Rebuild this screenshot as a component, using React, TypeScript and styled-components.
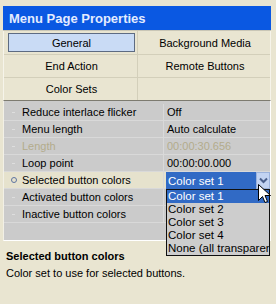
import React from "react";
import styled, { createGlobalStyle } from "styled-components";

const GlobalStyle = createGlobalStyle`
  html, body {
    margin: 0;
    padding: 0;
    background: #e9e5d1;
  }
  body {
    font-family: "Liberation Sans", Arial, sans-serif;
    font-size: 11px;
    color: #000;
  }
`;

const Window = styled.div`
  position: relative;
  width: 276px;
  height: 304px;
  box-sizing: border-box;
  padding: 6px 5px 0 3px;
  background: #e9e5d1;
  overflow: hidden;
`;

const TitleBar = styled.div`
  height: 24px;
  display: flex;
  align-items: center;
  padding-left: 6px;
  background: #0a58e2;
  color: #e4ecff;
  font-size: 13px;
  font-weight: bold;
  border-bottom: 1px solid #c9c6b6;
`;

const Tabs = styled.div`
  display: grid;
  grid-template-columns: 134px 1fr;
  grid-template-rows: 24px 23px 22px;
  border-left: 1px solid #f6f4ea;
  border-right: 1px solid #f6f4ea;
`;

const TabCell = styled.div<{ $left?: boolean; $last?: boolean }>`
  display: flex;
  align-items: center;
  justify-content: center;
  border-right: ${(p) => (p.$left ? "1px solid #d3cfba" : "none")};
  border-bottom: ${(p) => (p.$last ? "none" : "1px solid #d3cfba")};
  padding: 2px 2px 2px 4px;
`;

const TabButton = styled.div<{ $active?: boolean }>`
  flex: 1;
  align-self: stretch;
  display: flex;
  align-items: center;
  justify-content: center;
  background: ${(p) => (p.$active ? "#c9dbf5" : "transparent")};
  border: 1px solid ${(p) => (p.$active ? "#5d6b82" : "transparent")};
`;

const Grid = styled.div`
  position: relative;
  height: 141px;
  box-sizing: border-box;
  padding-top: 3px;
  background: #cbcbcb;
  border-top: 1px solid #7d7b70;
  border-left: 1px solid #f2f0e6;
  border-right: 1px solid #ffffff;
  border-bottom: 1px solid #ffffff;
`;

const Row = styled.div<{ $selected?: boolean }>`
  display: grid;
  grid-template-columns: 16px 144px 1fr;
  height: 17px;
  box-sizing: border-box;
  border-bottom: 1px solid #d9d9d9;
  background: ${(p) => (p.$selected ? "#e6e2cd" : "transparent")};
`;

const Gutter = styled.div`
  display: flex;
  align-items: center;
  justify-content: center;
  padding-left: 3px;
`;

const Dash = styled.span`
  width: 3px;
  height: 1px;
  background: #dedede;
`;

const Dot = styled.span`
  width: 4px;
  height: 4px;
  border-radius: 50%;
  border: 1px solid #5d74a0;
`;

const Label = styled.div<{ $disabled?: boolean }>`
  display: flex;
  align-items: center;
  padding-left: 2px;
  color: ${(p) => (p.$disabled ? "#b3ab8c" : "#000")};
  white-space: nowrap;
  border-right: 1px solid #d9d9d9;
`;

const Value = styled.div<{ $disabled?: boolean }>`
  position: relative;
  display: flex;
  align-items: center;
  padding-left: 3px;
  color: ${(p) => (p.$disabled ? "#b3ab8c" : "#000")};
  white-space: nowrap;
`;

const Combo = styled.div`
  position: absolute;
  inset: 0 0 -1px 2px;
  display: flex;
  align-items: center;
  background: #316ac5;
  color: #fff;
  font-size: 11.5px;
`;

const ComboText = styled.span`
  flex: 1;
  padding-left: 2px;
`;

const ComboButton = styled.div`
  width: 14px;
  align-self: stretch;
  display: flex;
  align-items: center;
  justify-content: center;
  background: #c2d3f2;
  border: 1px solid #9bb2dc;
  box-sizing: border-box;
`;

const ListBox = styled.div`
  position: absolute;
  top: calc(100% + 1px);
  left: 2px;
  right: 0;
  z-index: 2;
  background: #cdcdcd;
  border: 1px solid #101010;
  overflow: hidden;
  font-size: 11.5px;
`;

const ListItem = styled.div<{ $active?: boolean }>`
  height: 13px;
  line-height: 13px;
  padding-left: 1px;
  white-space: nowrap;
  background: ${(p) => (p.$active ? "#316ac5" : "transparent")};
  color: ${(p) => (p.$active ? "#fff" : "#000")};
`;

const Cursor = styled.svg`
  position: absolute;
  left: 258px;
  top: 184px;
  z-index: 5;
`;

const Description = styled.div`
  padding: 8px 0 0 3px;
`;

const DescTitle = styled.div`
  font-weight: bold;
  height: 14px;
  line-height: 14px;
  margin-bottom: 3px;
`;

const DescText = styled.div`
  height: 14px;
  line-height: 14px;
`;

type Prop = { label: string; value: string; disabled?: boolean; selected?: boolean };

const props: Prop[] = [
  { label: "Reduce interlace flicker", value: "Off" },
  { label: "Menu length", value: "Auto calculate" },
  { label: "Length", value: "00:00:30.656", disabled: true },
  { label: "Loop point", value: "00:00:00.000" },
  { label: "Selected button colors", value: "Color set 1", selected: true },
  { label: "Activated button colors", value: "" },
  { label: "Inactive button colors", value: "" },
];

const options = ["Color set 1", "Color set 2", "Color set 3", "Color set 4", "None (all transparent)"];

export default function App() {
  return (
    <Window>
      <GlobalStyle />
      <TitleBar>Menu Page Properties</TitleBar>
      <Tabs>
        <TabCell $left>
          <TabButton $active>General</TabButton>
        </TabCell>
        <TabCell>
          <TabButton>Background Media</TabButton>
        </TabCell>
        <TabCell $left>
          <TabButton>End Action</TabButton>
        </TabCell>
        <TabCell>
          <TabButton>Remote Buttons</TabButton>
        </TabCell>
        <TabCell $left $last>
          <TabButton>Color Sets</TabButton>
        </TabCell>
        <TabCell $last />
      </Tabs>
      <Grid>
        {props.map((p) => (
          <Row key={p.label} $selected={p.selected}>
            <Gutter>{p.selected ? <Dot /> : <Dash />}</Gutter>
            <Label $disabled={p.disabled}>{p.label}</Label>
            <Value $disabled={p.disabled}>
              {p.selected ? (
                <>
                  <Combo>
                    <ComboText>{p.value}</ComboText>
                    <ComboButton>
                      <svg width="9" height="7" viewBox="0 0 9 7">
                        <path d="M1 1.5 L4.5 5 L8 1.5" fill="none" stroke="#4a5f8c" strokeWidth="2" />
                      </svg>
                    </ComboButton>
                  </Combo>
                  <ListBox>
                    {options.map((o, i) => (
                      <ListItem key={o} $active={i === 0}>
                        {o}
                      </ListItem>
                    ))}
                  </ListBox>
                </>
              ) : (
                p.value
              )}
            </Value>
          </Row>
        ))}
      </Grid>
      <Description>
        <DescTitle>Selected button colors</DescTitle>
        <DescText>Color set to use for selected buttons.</DescText>
      </Description>
      <Cursor width="13" height="21" viewBox="0 0 13 21">
        <path
          d="M0.5 0.5 L0.5 16.5 L4.5 12.5 L7 18.5 L9.5 17.5 L7 11.5 L12.5 11.5 Z"
          fill="#fff"
          stroke="#000"
          strokeWidth="1"
        />
      </Cursor>
    </Window>
  );
}
